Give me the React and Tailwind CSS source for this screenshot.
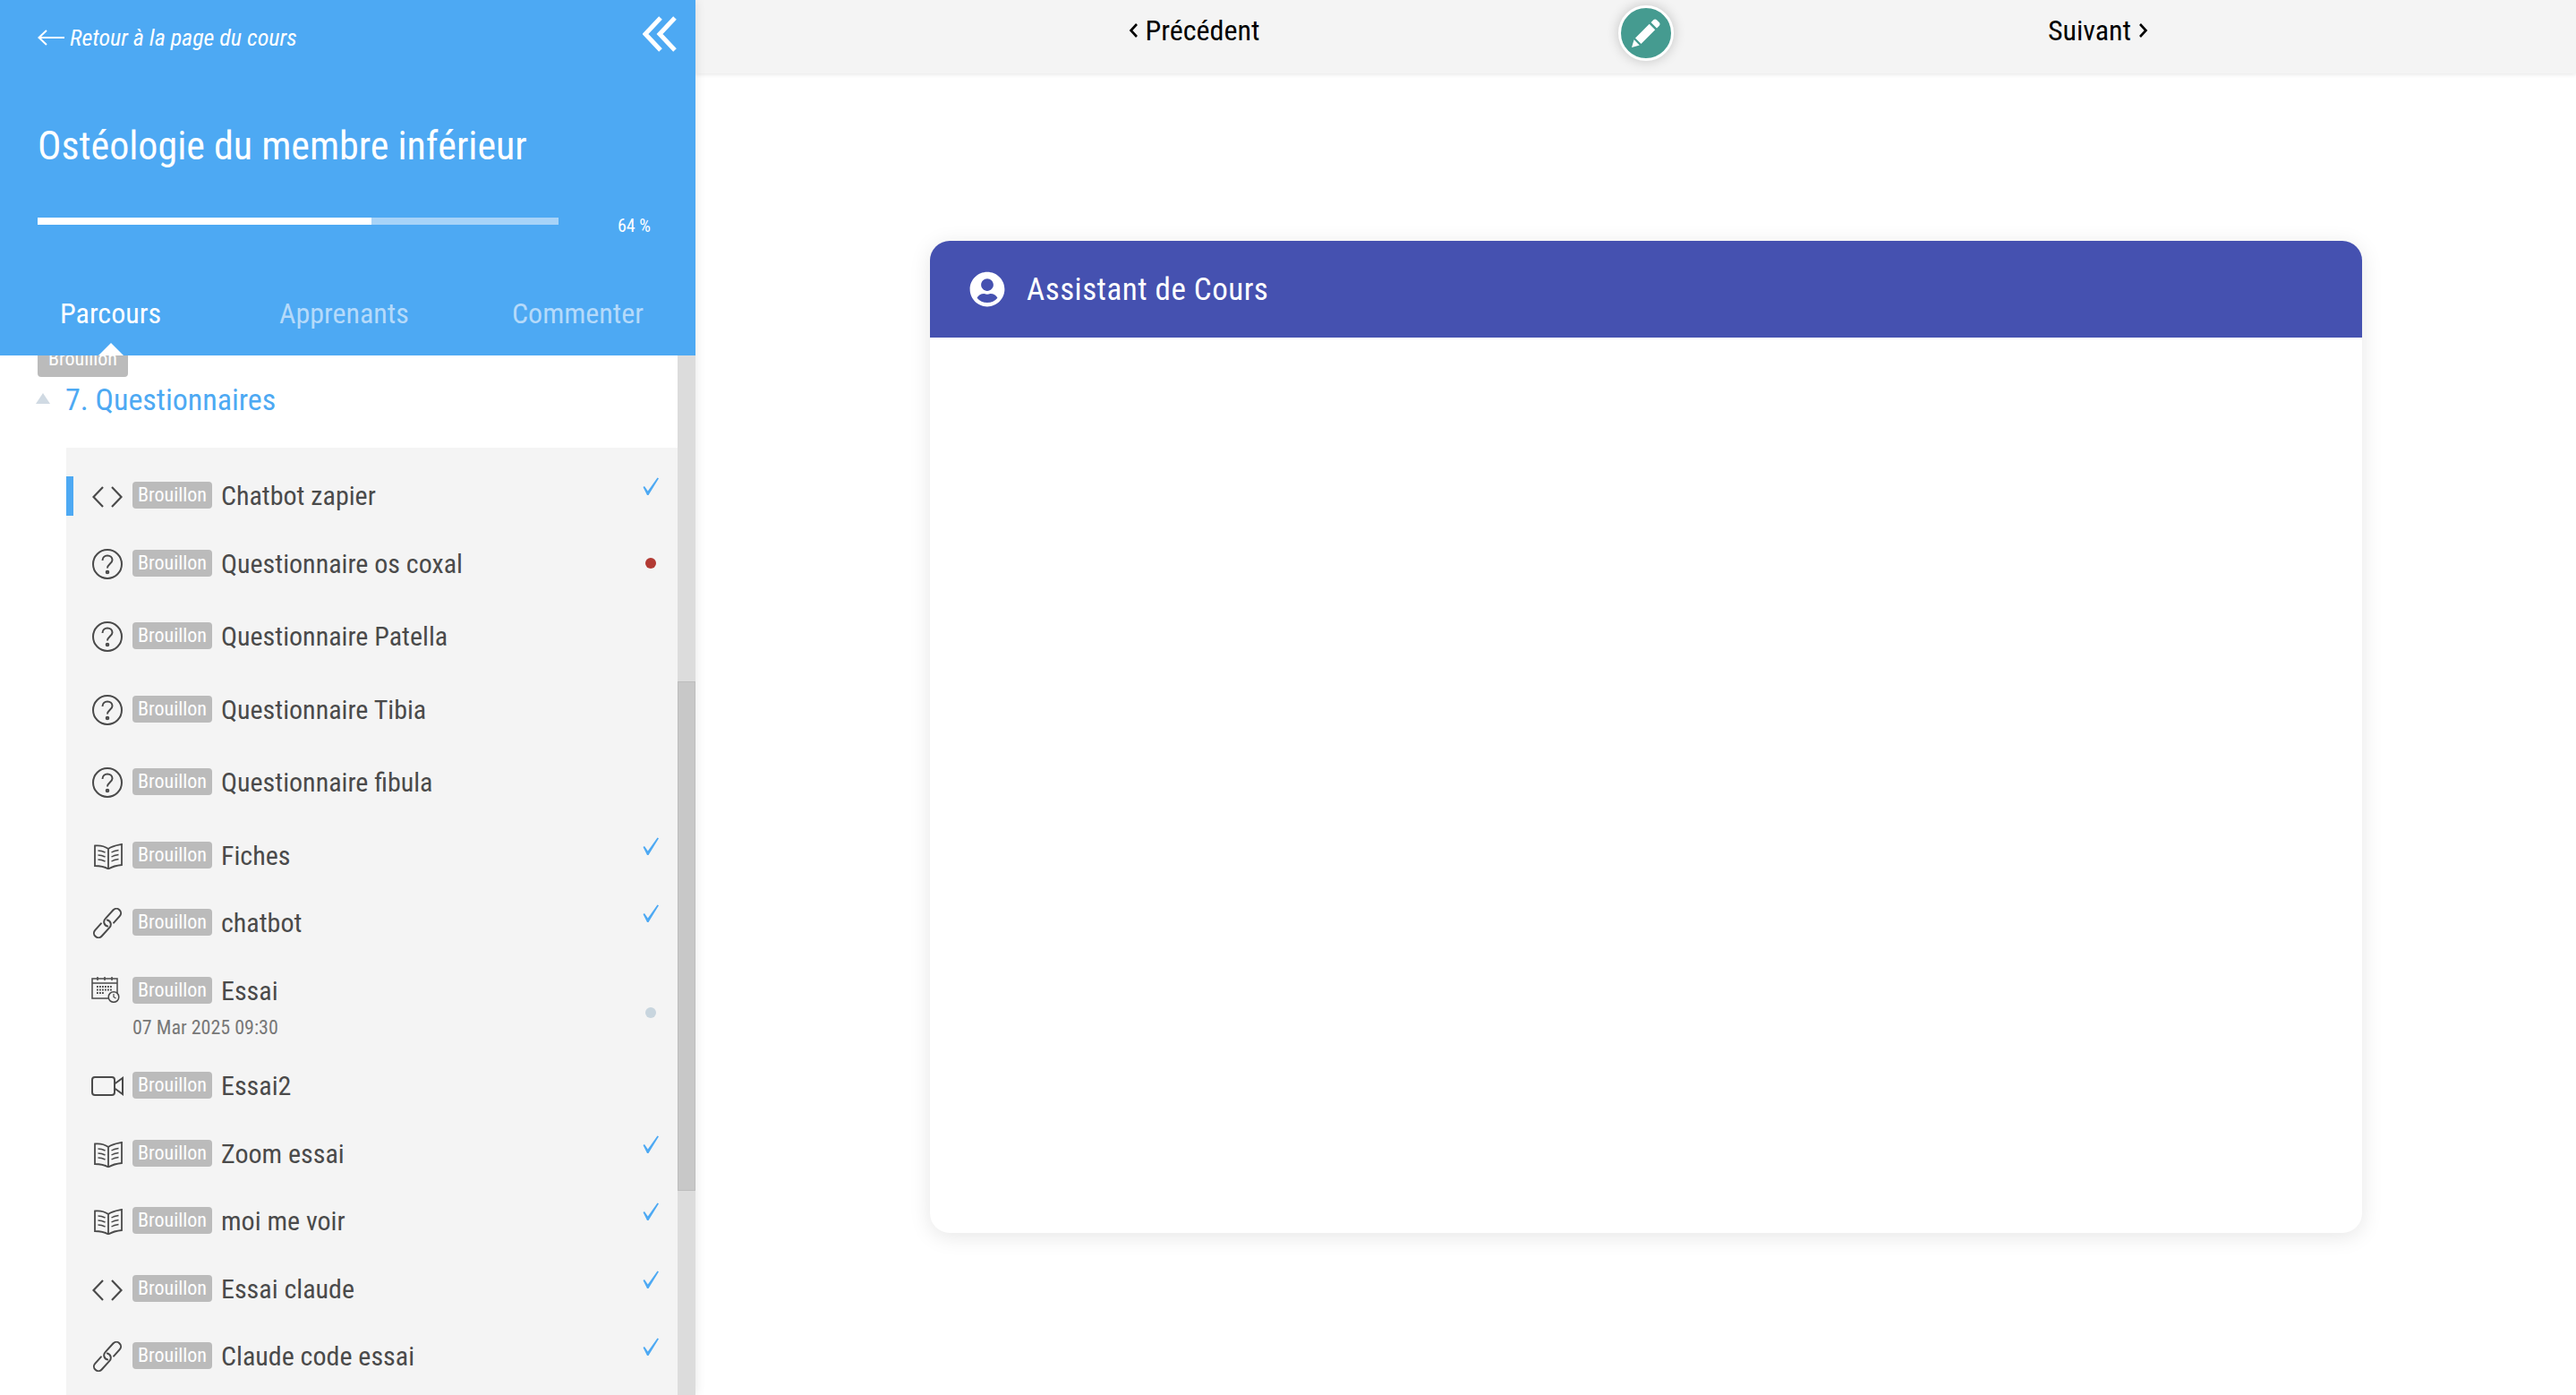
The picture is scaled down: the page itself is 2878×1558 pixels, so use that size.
import React from "react";
import { FaUserCircle } from "react-icons/fa";

const Code = () => (
  <svg width="34" height="24" viewBox="0 0 34 24" fill="none" stroke="#4a4a4a" strokeWidth="2.2">
    <path d="M12 1 1.500 12 12 23M22 1l10.500 11L22 23" />
  </svg>
);
const Question = () => (
  <svg width="34" height="34" viewBox="0 0 34 34" fill="none" stroke="#4a4a4a" strokeWidth="2">
    <circle cx="17" cy="17" r="16" />
    <path d="M11.500 13c0-3.500 2.500-5.500 5.500-5.500s5.500 2 5.500 5c0 3.500-5.500 4.500-5.500 9" />
    <circle cx="17" cy="26" r="1.300" />
  </svg>
);
const Book = () => (
  <svg width="32" height="30" viewBox="0 0 32 30" fill="none" stroke="#4a4a4a" strokeWidth="1.800">
    <path d="M1 3.500c5-.5 10 0 15 3.500 5-3.500 10-4 15-5v23c-5 .5-10 1.500-15 4.500-5-3-10-3.500-15-3.500zM16 7v22" />
    <path d="M4.500 9c2.500 0 5 .5 8 2M4.500 14c2.500 0 5 .5 8 2M4.500 19c2.500 0 5 .5 8 2M19.500 11c2.500-1.500 5-2 8-2.500M19.500 16c2.500-1.500 5-2 8-2.500M19.500 21c2.500-1.500 5-2 8-2.500" strokeWidth="1.400" />
  </svg>
);
const Link = () => (
  <svg width="34" height="34" viewBox="-17 -17 34 34" fill="none" stroke="#4a4a4a" strokeWidth="2" strokeLinecap="round">
    <g transform="rotate(-48)">
      <path d="M-5-5H-15a5 5 0 0 0 0 10H-2a5 5 0 0 0 4.500-7.500" />
      <path transform="rotate(180)" d="M-5-5H-15a5 5 0 0 0 0 10H-2a5 5 0 0 0 4.500-7.500" />
    </g>
  </svg>
);
const Calendar = () => (
  <svg width="32" height="30" viewBox="0 0 32 30" fill="none" stroke="#4a4a4a" strokeWidth="1.500">
    <path d="M20 25H1V3h28v17M1 8h28M7 1v4M15 1v4M23 1v4" />
    <path d="M6 12h18M6 15.500h18M6 19h9" strokeWidth="1.800" strokeDasharray="1.800 1.200" />
    <circle cx="25" cy="23.500" r="5.800" fill="#f4f4f4" />
    <path d="M25 20v3.500l2.500 1.500" strokeWidth="1.200" />
  </svg>
);
const Video = () => (
  <svg width="36" height="22" viewBox="0 0 36 22" fill="none" stroke="#4a4a4a" strokeWidth="2">
    <rect x="1" y="1" width="25" height="20" rx="3" />
    <path d="M26 8.500 35 2v18l-9-6.500" />
  </svg>
);
const Check = () => (
  <svg width="18" height="20" viewBox="0 0 18 20" fill="#4da9f3">
    <path d="M0.500 11 2 10l3.800 5.500L16.500 0.500 18 1.200 6.500 20h-1.500z" />
  </svg>
);

const icons = { code: Code, q: Question, book: Book, link: Link, cal: Calendar, video: Video };

const rows = [
  { icon: "code", t: "Chatbot zapier", h: "h-[76px]", mark: "check" },
  { icon: "q", t: "Questionnaire os coxal", h: "h-[81px]", mark: "red" },
  { icon: "q", t: "Questionnaire Patella", h: "h-[82px]" },
  { icon: "q", t: "Questionnaire Tibia", h: "h-[81px]" },
  { icon: "q", t: "Questionnaire fibula", h: "h-[82px]" },
  { icon: "book", t: "Fiches", h: "h-[75px]", mark: "check" },
  { icon: "link", t: "chatbot", h: "h-[76px]", mark: "check" },
  { icon: "cal", t: "Essai", h: "h-[106px]", mark: "grey", date: "07 Mar 2025 09:30" },
  { icon: "video", t: "Essai2", h: "h-[76px]" },
  { icon: "book", t: "Zoom essai", h: "h-[75px]", mark: "check" },
  { icon: "book", t: "moi me voir", h: "h-[76px]", mark: "check" },
  { icon: "code", t: "Essai claude", h: "h-[75px]", mark: "check" },
  { icon: "link", t: "Claude code essai", h: "h-[76px]", mark: "check" },
];

const iconPos = {
  code: "mt-[5px]",
  q: "-mt-px",
  book: "mt-px ml-[2px]",
  link: "-mt-px",
  cal: "-mt-px -ml-px",
  video: "mt-[5px] -ml-px",
};

function Badge({ className = "" }) {
  return (
    <span className={"flex h-[30px] w-[89px] shrink-0 items-center justify-center rounded-[4px] bg-[#bbbbbb] text-[22px] leading-none text-white " + className}>
      Brouillon
    </span>
  );
}

function Row({ r, selected }) {
  const Icon = icons[r.icon];
  return (
    <div className={"relative flex items-start pl-[29px] pr-[21px] " + r.h}>
      {selected && <span className="absolute left-0 -top-[6px] h-[44px] w-[8px] bg-[#4da9f3]" />}
      <div className="flex h-[30px] w-[45px] shrink-0 items-start">
        <span className={iconPos[r.icon]}>
          <Icon />
        </span>
      </div>
      <div className="min-w-0 flex-1">
        <div className="flex items-center">
          <Badge />
          <span className="ml-[10px] text-[30px] leading-[30px] text-[#4a4a4a] translate-y-[1px]">{r.t}</span>
        </div>
        {r.date && <div className="mt-[14px] text-[22px] leading-[26px] text-[#777777]">{r.date}</div>}
      </div>
      {r.mark === "check" && (
        <span className="-mt-[5px]">
          <Check />
        </span>
      )}
      {r.mark === "red" && <span className="mr-[3px] mt-[9px] h-[12px] w-[12px] rounded-full bg-[#b23a33]" />}
      {r.mark === "grey" && <span className="mr-[3px] mt-[34px] h-[12px] w-[12px] rounded-full bg-[#c8d5de]" />}
    </div>
  );
}

export default function App() {
  return (
    <div className="flex h-[1558px] w-[2878px] overflow-hidden bg-white font-['Roboto_Condensed',Roboto,sans-serif] [font-stretch:75%]">
      <aside className="relative z-10 flex h-full w-[777px] shrink-0 flex-col shadow-[2px_0_10px_rgba(0,0,0,0.08)]">
        <header className="relative z-10 flex h-[397px] shrink-0 flex-col bg-[#4da9f3] text-white">
          <div className="flex h-[84px] items-start justify-between pl-[42px] pr-[21px] pt-[18px]">
            <div className="flex items-center pt-[8px] text-[26px] italic leading-[32px]">
              <svg width="30" height="18" viewBox="0 0 30 18" fill="none" stroke="#fff" strokeWidth="2" className="mr-[6px]">
                <path d="M10 1 1.500 9l8.500 8M2 9h28" />
              </svg>
              Retour à la page du cours
            </div>
            <svg width="38" height="40" viewBox="0 0 38 40" fill="none" stroke="#fff" strokeWidth="5">
              <path d="M20 2 3 20l17 18M36 2 19 20l17 18" />
            </svg>
          </div>
          <h1 className="pl-[42px] pt-[53px] text-[44px] font-normal leading-[52px]">Ostéologie du membre inférieur</h1>
          <div className="mt-[45px] flex items-center pl-[42px]">
            <div className="flex h-[8px] w-[582px] bg-[#a7d3f8]">
              <div className="h-full w-[373px] bg-white" />
            </div>
            <span className="ml-[66px] mt-[6px] translate-y-[2px] text-[20px] leading-[20px]">64 %</span>
          </div>
          <div className="mt-[70px] flex">
            {["Parcours", "Apprenants", "Commenter"].map((t, i) => (
              <div key={t} className={"relative w-[261px] text-center text-[32px] leading-[40px] " + (i === 0 ? "text-white -ml-[7px]" : "text-[#b5dafa]")}>
                {t}
              </div>
            ))}
          </div>
          <span className="absolute bottom-0 left-[110px] h-0 w-0 border-x-[14px] border-b-[14px] border-x-transparent border-b-white" />
        </header>
        <div className="flex min-h-0 flex-1 bg-white">
          <div className="flex min-w-0 flex-1 flex-col overflow-hidden">
            <Badge className="-mt-[11px] ml-[42px] !h-[35px] !w-[101px] pb-[5px]" />
            <div className="flex h-[79px] shrink-0 items-start pl-[40px] pt-[5px]">
              <span className="mt-[13px] h-0 w-0 border-x-[8px] border-b-[12px] border-x-transparent border-b-[#d0dae3]" />
              <span className="ml-[17px] text-[34px] leading-[40px] text-[#4da9f3]">7. Questionnaires</span>
            </div>
            <div className="ml-[74px] flex-1 bg-[#f4f4f4] pt-[38px]">
              {rows.map((r, i) => (
                <Row key={r.t} r={r} selected={i === 0} />
              ))}
            </div>
          </div>
          <div className="w-[20px] shrink-0 bg-[#dcdcdc] pt-[364px]">
            <div className="h-[569px] border border-[#bdbdbd] bg-[#c8c8c8]" />
          </div>
        </div>
      </aside>
      <main className="flex min-w-0 flex-1 flex-col">
        <nav className="flex h-[82px] shrink-0 items-start justify-center gap-[274px] bg-[#f4f4f4] pl-[23px] pt-[6px] text-[32px] leading-[52px] text-black shadow-[0_2px_4px_rgba(0,0,0,0.08)]">
          <span className="flex w-[400px] translate-y-[2px] items-center justify-center gap-[8px]">
            <svg width="11" height="18" viewBox="0 0 11 18" fill="none" stroke="#000" strokeWidth="2.600"><path d="M9 2 2.500 9 9 16" /></svg>
            Précédent
          </span>
          <span className="flex h-[62px] w-[62px] shrink-0 items-center justify-center rounded-full border-[3px] border-white bg-[#459b90] shadow-[0_0_14px_rgba(0,0,0,0.2)]">
            <svg width="36" height="36" viewBox="0 0 36 36" fill="#fff">
              <path d="M26 3.500a3 3 0 0 1 4.200 0l2.300 2.300a3 3 0 0 1 0 4.200l-2.500 2.500-6.500-6.500zM21.700 7.800l6.500 6.500L12.500 30 6 23.500zM4.600 25.300l6.100 6.100L2 34z" />
            </svg>
          </span>
          <span className="flex w-[400px] translate-y-[2px] items-center justify-center gap-[8px]">
            Suivant
            <svg width="11" height="18" viewBox="0 0 11 18" fill="none" stroke="#000" strokeWidth="2.600"><path d="m2 2 6.500 7L2 16" /></svg>
          </span>
        </nav>
        <div className="flex flex-1 justify-center pl-[23px] pt-[187px]">
          <section className="h-[1108px] w-[1600px] overflow-hidden rounded-[22px] bg-white shadow-[0_4px_24px_rgba(0,0,0,0.1)]">
            <div className="flex h-[108px] items-center bg-[#4551b0] pl-[44px] text-white">
              <FaUserCircle size={40} />
              <span className="ml-[24px] text-[35px] leading-[44px] tracking-[0.5px] translate-y-[1px]">Assistant de Cours</span>
            </div>
          </section>
        </div>
      </main>
    </div>
  );
}
